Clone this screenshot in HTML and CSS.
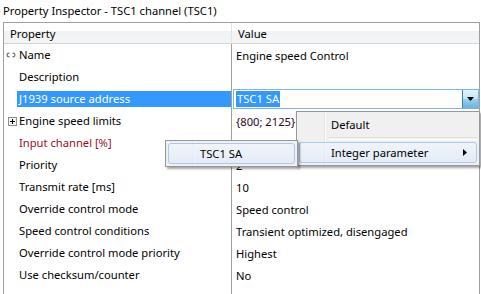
FILE: index.html
```html
<!DOCTYPE html>
<html>
<head>
<meta charset="utf-8">
<link rel="stylesheet" href="styles.css">
</head>
<body>
<div class="title">Property Inspector - TSC1 channel (TSC1)</div>
<div class="panel">
  <div class="grid">
    <div class="hcell hleft">Property</div>
    <div class="hcell hright">Value</div>

    <div class="cell left"><span class="icon"><svg width="11" height="6" viewBox="0 0 11 6"><path d="M3.5 1.2 Q1 0.5 1 3 Q1 5.5 3.5 4.8" fill="none" stroke="#505050" stroke-width="1"/><path d="M6.5 1.2 Q9 0.5 9 3 Q9 5.5 6.5 4.8" fill="none" stroke="#505050" stroke-width="1"/></svg></span><span class="lbl">Name</span></div>
    <div class="cell right">Engine speed Control</div>

    <div class="cell left"><span class="icon"></span><span class="lbl">Description</span></div>
    <div class="cell right"></div>

    <div class="cell left"><span class="icon"></span><span class="lbl sel">J1939 source address</span></div>
    <div class="cell right combo-cell">
      <div class="combo"><span class="combo-text">TSC1 SA</span><span class="combo-btn"><svg width="7" height="4" viewBox="0 0 7 4"><path d="M0 0 H7 L3.5 4 Z" fill="#000"/></svg></span></div>
    </div>

    <div class="cell left"><span class="icon"><span class="plus"><svg width="9" height="9" viewBox="0 0 9 9"><rect x="0.5" y="0.5" width="8" height="8" fill="#f4f4f4" stroke="#8f8f8f"/><path d="M2 4.5 H7 M4.5 2 V7" stroke="#000" stroke-width="1"/></svg></span></span><span class="lbl">Engine speed limits</span></div>
    <div class="cell right dark">{800; 2125}</div>

    <div class="cell left"><span class="icon"></span><span class="lbl red">Input channel [%]</span></div>
    <div class="cell right red">Speed control</div>

    <div class="cell left"><span class="icon"></span><span class="lbl">Priority</span></div>
    <div class="cell right">2</div>

    <div class="cell left"><span class="icon"></span><span class="lbl">Transmit rate [ms]</span></div>
    <div class="cell right">10</div>

    <div class="cell left"><span class="icon"></span><span class="lbl">Override control mode</span></div>
    <div class="cell right">Speed control</div>

    <div class="cell left"><span class="icon"></span><span class="lbl">Speed control conditions</span></div>
    <div class="cell right">Transient optimized, disengaged</div>

    <div class="cell left"><span class="icon"></span><span class="lbl">Override control mode priority</span></div>
    <div class="cell right">Highest</div>

    <div class="cell left"><span class="icon"></span><span class="lbl">Use checksum/counter</span></div>
    <div class="cell right">No</div>

    <div class="cell left"></div>
    <div class="cell right"></div>
  </div>
</div>

<div class="menu main-menu">
  <div class="mitem"><span class="mtext">Default</span></div>
  <div class="msep"></div>
  <div class="mitem hover"><span class="mtext">Integer parameter</span><span class="arrow"><svg width="4" height="7" viewBox="0 0 4 7"><path d="M0 0 L4 3.5 L0 7 Z" fill="#000"/></svg></span></div>
</div>

<div class="menu sub-menu">
  <div class="mitem hover"><span class="mtext">TSC1 SA</span></div>
</div>
</body>
</html>
```
FILE: styles.css
```css
html, body {
  margin: 0;
  padding: 0;
  background: #ffffff;
  width: 481px;
  height: 294px;
  overflow: hidden;
}
body {
  font-family: "Segoe UI", "Noto Sans", "Open Sans", sans-serif;
  font-size: 11.2px;
  color: #000;
  position: relative;
}
.title {
  height: 22px;
  line-height: 22px;
  padding-left: 3px;
  white-space: nowrap;
}
.panel {
  margin-left: 3px;
  width: 475px;
  height: 280px;
  border: 1px solid #a0a0a0;
  border-bottom: none;
}
.grid {
  display: grid;
  grid-template-columns: 228px 1fr;
  grid-auto-rows: 22px;
  grid-template-rows: 21px;
}
.hcell {
  background: linear-gradient(#ffffff 0%, #ffffff 40%, #f1f2f4 41%, #f3f4f6 100%);
  border-bottom: 1px solid #d5d5d5;
  line-height: 21px;
  height: 20px;
  white-space: nowrap;
}
.hleft {
  padding-left: 6px;
  border-right: 1px solid #e3e3e3;
}
.hright {
  padding-left: 6px;
}
.cell {
  display: flex;
  align-items: center;
  white-space: nowrap;
  overflow: hidden;
}
.left {
  border-right: 1px solid #a0a0a0;
}
.right {
  padding-left: 4px;
}
.icon {
  width: 13px;
  height: 22px;
  flex: none;
  display: flex;
  align-items: center;
  justify-content: flex-end;
  padding-right: 2px;
}
.plus {
  display: flex;
}
.lbl {
  line-height: 16px;
}
.sel {
  background: #3399ff;
  color: #fff;
  flex: 1;
  margin-left: -2px;
  padding-left: 2px;
  height: 16px;
}
.red {
  color: #9b0d1a;
}
.dark {
  color: #2a0520;
}
.combo-cell {
  padding-left: 1px;
  padding-right: 0;
}
.combo {
  flex: 1;
  height: 20px;
  border: 1px solid #7eb4ea;
  display: flex;
  align-items: center;
  background: #fff;
  box-sizing: border-box;
}
.combo-text {
  background: #3399ff;
  color: #fff;
  margin-left: 2px;
  padding: 0 1px;
  line-height: 16px;
  height: 16px;
}
.combo-btn {
  margin-left: auto;
  width: 16px;
  height: 18px;
  box-sizing: border-box;
  border-left: 1px solid #3c7fb1;
  background: linear-gradient(#e5f4fc 0%, #c4e5f6 50%, #98d1ef 51%, #68b3db 100%);
  display: flex;
  align-items: center;
  justify-content: center;
}
.menu {
  position: absolute;
  background: #f0f0f0;
  border: 1px solid #979797;
  box-shadow: 2px 2px 2px rgba(0, 0, 0, 0.35);
  box-sizing: border-box;
  padding: 2px;
  background-image: linear-gradient(to right, transparent 27px, #e2e3e3 27px, #e2e3e3 28px, #ffffff 28px, #ffffff 29px, transparent 29px);
}
.main-menu {
  left: 296px;
  top: 111px;
  width: 184px;
  height: 55px;
  padding-top: 1px;
}
.sub-menu {
  left: 165px;
  top: 140px;
  width: 133px;
  height: 27px;
}
.mitem {
  height: 22px;
  display: flex;
  align-items: center;
  box-sizing: border-box;
  border: 1px solid transparent;
  border-radius: 3px;
}
.main-menu .mitem.hover {
  height: 21px;
}
.sub-menu .mitem {
  height: 21px;
}
.mitem.hover {
  border-color: #a8caf0;
  background: linear-gradient(rgba(240, 246, 253, 0.7), rgba(222, 234, 250, 0.7));
}
.mtext {
  padding-left: 31px;
  white-space: nowrap;
}
.arrow {
  margin-left: auto;
  margin-right: 9px;
  display: flex;
}
.msep {
  height: 1px;
  margin: 2px 0 2px 30px;
  border-top: 1px solid #e0e0e0;
  border-bottom: 1px solid #ffffff;
}
```
